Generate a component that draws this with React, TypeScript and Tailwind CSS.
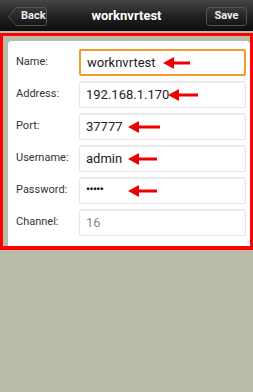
import React from 'react';

function Arrow({ left, width = 28 }: { left: number; width?: number }) {
  return (
    <svg
      className="absolute top-1/2 -translate-y-1/2"
      style={{ left }}
      width={width}
      height={12}
      viewBox={`0 0 ${width} 12`}
    >
      <polygon points={`0,6 11,0 11,12`} fill="#ee0000" />
      <rect x={9} y={4.5} width={width - 9} height={3} fill="#ee0000" />
    </svg>
  );
}

export default function App() {
  const rows = [
    { label: 'Name:', value: 'worknvrtest', focused: true, arrow: 84, aw: 27 },
    { label: 'Address:', value: '192.168.1.170', arrow: 89, aw: 30 },
    { label: 'Port:', value: '37777', arrow: 49, aw: 32 },
    { label: 'Username:', value: 'admin', arrow: 49, aw: 29 },
    { label: 'Password:', value: '•••••', password: true, arrow: 49, aw: 29 },
    { label: 'Channel:', value: '16', muted: true },
  ];

  return (
    <div className="w-[253px] h-[392px] bg-[#babba8] overflow-hidden" style={{ fontFamily: 'Roboto, "Liberation Sans", sans-serif' }}>
      {/* header */}
      <div className="h-[31px] bg-gradient-to-b from-[#474747] via-[#222] to-[#0e0e0e] relative flex items-center justify-center">
        <div className="absolute left-[8px] top-[7px] h-[19px] w-[39px]">
          <svg className="absolute inset-0" width="39" height="19" viewBox="0 0 39 19">
            <defs>
              <linearGradient id="bb" x1="0" y1="0" x2="0" y2="1">
                <stop offset="0" stopColor="#3a3a3a" />
                <stop offset="1" stopColor="#141414" />
              </linearGradient>
            </defs>
            <path d="M0.5,9.5 L8,1 Q8.5,0.5 9.5,0.5 L36,0.5 Q38.5,0.5 38.5,3 L38.5,16 Q38.5,18.5 36,18.5 L9.5,18.5 Q8.5,18.5 8,18 Z" fill="url(#bb)" stroke="#555" strokeWidth="1" />
          </svg>
          <span className="absolute left-[13px] top-0 h-[19px] flex items-center text-[#eee] text-[11px] font-bold">Back</span>
        </div>
        <span className="text-white text-[13px] font-bold">worknvrtest</span>
        <div className="absolute right-[6px] top-[7px] h-[19px] w-[41px] rounded-[4px] border border-[#555] bg-gradient-to-b from-[#3a3a3a] to-[#141414] flex items-center justify-center">
          <span className="text-[#eee] text-[11px] font-bold">Save</span>
        </div>
      </div>

      {/* highlighted form */}
      <div className="mt-[2px] h-[217px] border-[3px] border-b-[4px] border-[#ff0000] pl-[5px] pt-[5px]">
        <div className="h-full bg-white rounded-t-[4px] pl-[8px] pr-[4px] pt-[8px] flex flex-col gap-[5px]">
          {rows.map((r) => (
            <div key={r.label} className="flex items-center">
              <div className="w-[63px] text-[11px] text-[#333]">{r.label}</div>
              <div
                className={
                  'relative flex-1 h-[27px] flex items-center pl-[6px] ' +
                  (r.focused
                    ? 'border-2 border-[#f29a2e] rounded-[2px]'
                    : 'border border-[#e4e4e4] rounded-[2px] shadow-[inset_0_1px_2px_rgba(0,0,0,0.06)]')
                }
              >
                <span
                  className={
                    r.password
                      ? 'text-[11px] font-bold tracking-[-0.5px] text-[#111]'
                      : r.muted
                      ? 'text-[13px] text-[#8a8a8a]'
                      : 'text-[13px] text-[#222]'
                  }
                >
                  {r.value}
                </span>
                {r.arrow !== undefined && <Arrow left={r.arrow - (r.focused ? 2 : 1)} width={r.aw} />}
              </div>
            </div>
          ))}
        </div>
      </div>
    </div>
  );
}
